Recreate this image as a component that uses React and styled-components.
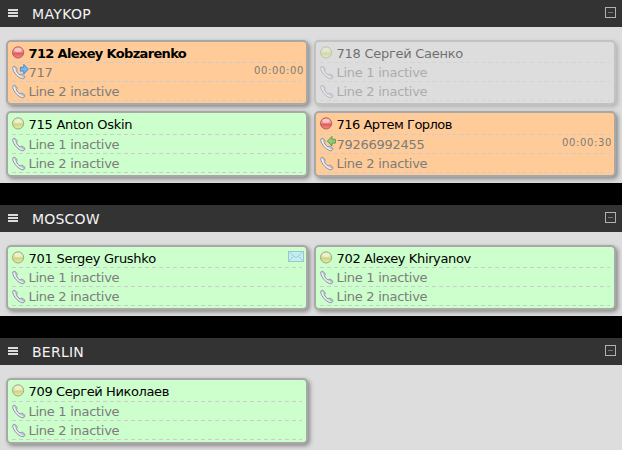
import React from "react";
import styled, { createGlobalStyle } from "styled-components";

const Global = createGlobalStyle`
  html, body { margin: 0; padding: 0; height: 100%; background: #000; overflow: hidden; }
  * { box-sizing: border-box; }
`;

const Page = styled.main`
  width: 622px;
  height: 450px;
  overflow: hidden;
  display: flex;
  flex-direction: column;
  gap: 22px;
  background: #000;
  font-family: Verdana, "DejaVu Sans", sans-serif;
  font-size: 13px;
`;

const Group = styled.section`
  flex: none;
`;

const Header = styled.header`
  height: 27px;
  background: #333;
  display: flex;
  align-items: center;
  padding: 0 6px 0 8px;
`;

const MenuBars = styled.span`
  width: 10px;
  height: 8px;
  margin-bottom: 1px;
  border-top: 2px solid #dcdcdc;
  border-bottom: 2px solid #dcdcdc;
  display: flex;
  align-items: center;
  &::before { content: ""; width: 10px; height: 2px; background: #dcdcdc; }
`;

const Title = styled.h2`
  margin: 1px 0 0 14px;
  flex: 1;
  font-size: 14px;
  font-weight: 400;
  line-height: 20px;
  letter-spacing: ${(p) => p.$tracking || 0}px;
  color: #f4f4f4;
`;

const Collapse = styled.span`
  width: 11px;
  height: 11px;
  margin-bottom: 2px;
  border: 1px solid #b0b0b0;
  display: grid;
  place-items: center;
  &::before { content: ""; width: 5px; height: 1px; background: #777; }
`;

const Cards = styled.div`
  background: #ddd;
  padding: 13px 6px 6px;
  display: grid;
  grid-template-columns: 302px 302px;
  gap: 6px;
  align-items: start;
`;

const fills = { busy: "#fc9", free: "#cfc", offline: "#ddd" };

const Card = styled.article`
  border: 2px solid #a8a8a8;
  border-radius: 5px;
  padding: 0 4px 2px;
  background: ${(p) => fills[p.$state]};
  box-shadow: 2px 2px 4px rgba(0, 0, 0, 0.38);
  opacity: ${(p) => (p.$state === "offline" ? 0.5 : 1)};
`;

const Row = styled.div`
  height: ${(p) => p.$height || 19}px;
  display: flex;
  align-items: center;
  background: repeating-linear-gradient(90deg, #ccc 0 4px, transparent 4px 7px) 0 100% / 100% 1px no-repeat;
`;

const IconBox = styled.span`
  flex: none;
  width: 16.6px;
  height: 16px;
  display: flex;
  svg { overflow: visible; }
`;

const Name = styled.span`
  flex: 1;
  line-height: 16px;
  padding-top: 2px;
  white-space: nowrap;
  color: #000;
  font-weight: ${(p) => (p.$bold ? 700 : 400)};
  letter-spacing: ${(p) => p.$tracking || 0}px;
`;

const Line = styled.span`
  flex: 1;
  line-height: 16px;
  padding-top: 1px;
  white-space: nowrap;
  color: #7c7c7c;
  letter-spacing: -0.29px;
`;

const Timer = styled.span`
  font-size: 10px;
  line-height: 12px;
  margin: 0 -2px 4px 0;
  letter-spacing: 0.65px;
  color: #7c7c7c;
`;

const MailBox = styled.span`
  display: flex;
  margin: 0 -2px 2px 0;
`;

const Orb = ({ red }) => {
  const id = React.useId();
  return (
    <svg width="16" height="16" viewBox="0 0 16 16">
      <defs>
        <linearGradient id={id} x1="0" y1="0" x2="0" y2="1">
          <stop offset="0" stopColor={red ? "#f6b4b0" : "#e6eabf"} />
          <stop offset=".48" stopColor={red ? "#ef9090" : "#dde4a4"} />
          <stop offset=".56" stopColor={red ? "#df5a5a" : "#cad481"} />
          <stop offset="1" stopColor={red ? "#f08c88" : "#e6efb0"} />
        </linearGradient>
      </defs>
      <circle cx="6.1" cy="7.4" r="5.6" fill={`url(#${id})`} stroke={red ? "#bc5a58" : "#a3a878"} />
      <ellipse cx="6.1" cy="5" rx="3.6" ry="2" fill="#fff" opacity=".4" />
    </svg>
  );
};

const Phone = ({ call }) => (
  <svg width="16" height="16" viewBox="0 0 16 16">
    <g transform="translate(0 -1)">
      <path
        d="M.7 4.2C.5 2.9 1.6 2.1 2.6 2.4 3.8 2.8 5.1 4.2 5.1 5.4 5.1 6.2 4.5 6.4 4.6 7 5 8.3 6.6 10.1 7.9 10.7 8.7 11 8.8 10.2 9.8 10.2 11 10.2 12.7 11.7 12.8 12.8 12.9 14 11.8 14.9 10.5 14.7 6.4 14.1 1.3 8.5.7 4.2Z"
        fill="#cdd1df"
        stroke="#858a9c"
        strokeWidth=".9"
        strokeLinejoin="round"
      />
      <path d="M1.9 4.2C2.5 7.8 6.4 12.3 10 13.5" fill="none" stroke="#f6f7fb" strokeWidth="1.1" strokeLinecap="round" />
      <path d="M3.1 3.5 4.2 5.2M9.6 11.2 11.6 12.7" fill="none" stroke="#a5abbd" strokeWidth=".9" />
    </g>
    {call === "out" && (
      <path d="M8.4 2.3H11.8V-.6L16.3 4.2 11.8 9V6.1H8.4Z" fill="#74b8f4" stroke="#3a86cf" strokeWidth=".9" />
    )}
    {call === "in" && (
      <path d="M15.4 2.3H12V-.6L7.3 4.2 12 9V6.1H15.4Z" fill="#94c978" stroke="#559b48" strokeWidth=".9" />
    )}
  </svg>
);

const Envelope = () => (
  <MailBox>
    <svg width="16" height="11" viewBox="0 0 16 11">
      <rect x=".5" y=".5" width="15" height="10" fill="#c6eeee" stroke="#93c9d0" />
      <path d="M1.5 1.5 8 6.8 14.5 1.5M1.5 9.5 5.5 5.2M14.5 9.5 10.5 5.2" fill="none" stroke="#93c9d0" strokeWidth=".9" />
    </svg>
  </MailBox>
);

const groups = [
  {
    title: "MAYKOP",
    tracking: 0.35,
    people: [
      { name: "712 Alexey Kobzarenko", tracking: -0.66, state: "busy", bold: true, first: 21, line: "717", call: "out", time: "00:00:00" },
      { name: "718 Сергей Саенко", tracking: -0.27, state: "offline", first: 21 },
      { name: "715 Anton Oskin", tracking: -0.28, state: "free", first: 22 },
      { name: "716 Артем Горлов", tracking: -0.52, state: "busy", first: 22, line: "79266992455", call: "in", time: "00:00:30" },
    ],
  },
  {
    title: "MOSCOW",
    tracking: 0.2,
    people: [
      { name: "701 Sergey Grushko", tracking: -0.27, state: "free", first: 21, mail: true },
      { name: "702 Alexey Khiryanov", tracking: -0.37, state: "free", first: 21 },
    ],
  },
  {
    title: "BERLIN",
    tracking: 0.25,
    people: [{ name: "709 Сергей Николаев", tracking: -0.38, state: "free", first: 22 }],
  },
];

const PersonCard = ({ person }) => (
  <Card $state={person.state}>
    <Row $height={person.first}>
      <IconBox><Orb red={person.state === "busy"} /></IconBox>
      <Name $bold={person.bold} $tracking={person.tracking}>{person.name}</Name>
      {person.mail && <Envelope />}
    </Row>
    <Row>
      <IconBox><Phone call={person.call} /></IconBox>
      <Line>{person.line || "Line 1 inactive"}</Line>
      {person.time && <Timer>{person.time}</Timer>}
    </Row>
    <Row>
      <IconBox><Phone /></IconBox>
      <Line>Line 2 inactive</Line>
    </Row>
  </Card>
);

export default function App() {
  return (
    <>
      <Global />
      <Page>
        {groups.map((g) => (
          <Group key={g.title}>
            <Header>
              <MenuBars />
              <Title $tracking={g.tracking}>{g.title}</Title>
              <Collapse />
            </Header>
            <Cards>
              {g.people.map((p) => <PersonCard key={p.name} person={p} />)}
            </Cards>
          </Group>
        ))}
      </Page>
    </>
  );
}
